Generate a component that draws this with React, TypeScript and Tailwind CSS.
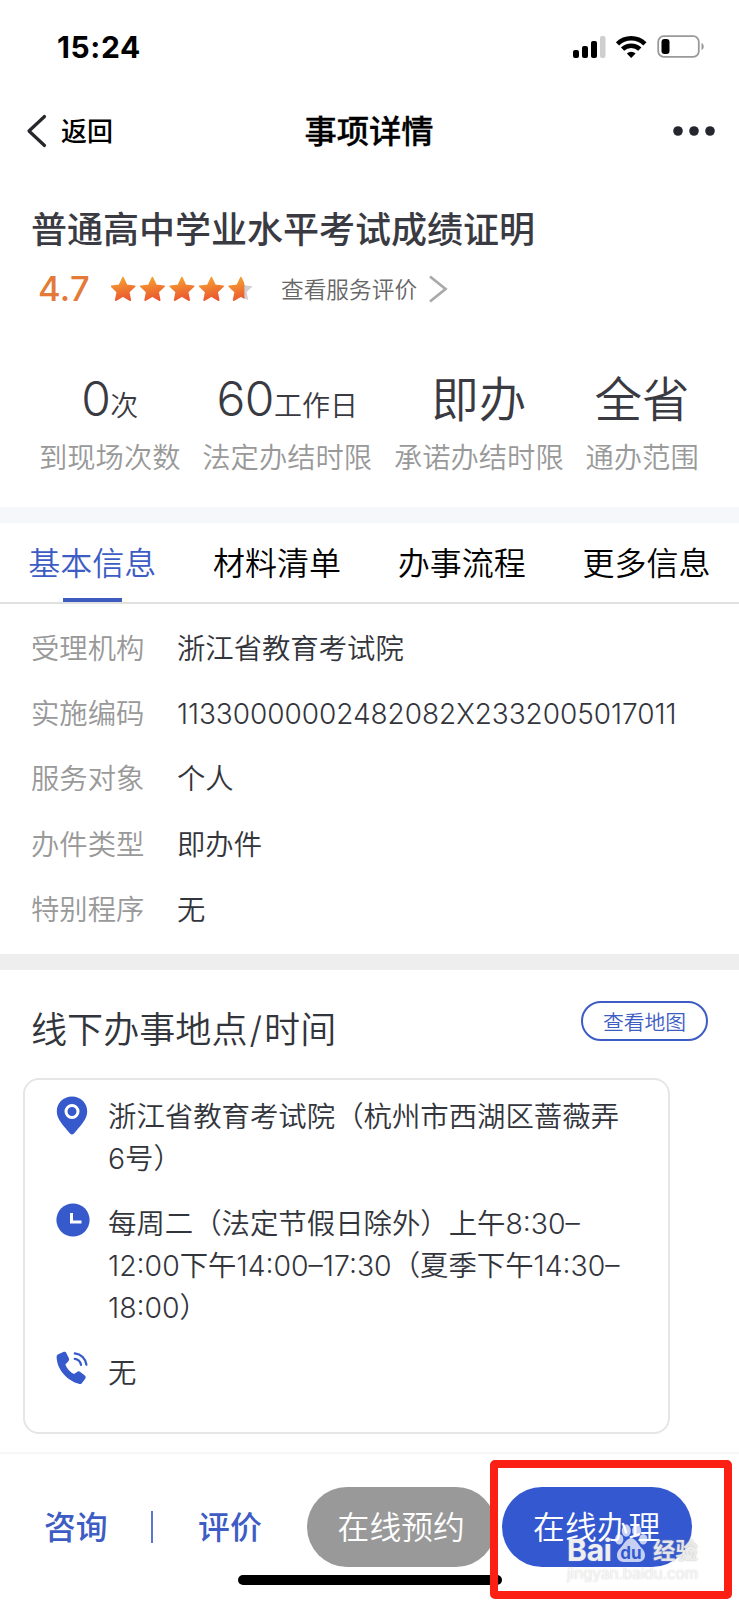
import React from "react";

const stats = [
  { num: "0", unit: "次", label: "到现场次数" },
  { num: "60", unit: "工作日", label: "法定办结时限" },
  { big: "即办", label: "承诺办结时限" },
  { big: "全省", label: "通办范围" },
];

const tabs = ["基本信息", "材料清单", "办事流程", "更多信息"];

const info = [
  ["受理机构", "浙江省教育考试院"],
  ["实施编码", "11330000002482082X2332005017011"],
  ["服务对象", "个人"],
  ["办件类型", "即办件"],
  ["特别程序", "无"],
];

const STAR = "M12 0.6 L15.5 8.2 L23.8 9.2 L17.7 14.9 L19.3 23.2 L12 19.1 L4.7 23.2 L6.3 14.9 L0.2 9.2 L8.5 8.2 Z";

function Stars() {
  return (
    <svg className="ml-[22px] h-[26px] w-[144px]" viewBox="0 0 144 26">
      <defs>
        <linearGradient id="star" x1="0.3" y1="0" x2="0.6" y2="1">
          <stop offset="0" stopColor="#f5a232" />
          <stop offset="1" stopColor="#ea5530" />
        </linearGradient>
        <clipPath id="part">
          <rect x="-1" y="-1" width="16.5" height="27" />
        </clipPath>
      </defs>
      {[0, 29.4, 58.9, 88.4].map((x) => (
        <path key={x} d={STAR} transform={`translate(${x} 1)`} fill="url(#star)" stroke="url(#star)" strokeWidth="1.6" strokeLinejoin="round" />
      ))}
      <g transform="translate(117.9 1)">
        <path d={STAR} fill="#cfcfd4" />
        <path d={STAR} fill="url(#star)" stroke="url(#star)" strokeWidth="1.6" strokeLinejoin="round" clipPath="url(#part)" />
      </g>
    </svg>
  );
}

function StatusBar() {
  return (
    <div className="flex h-[94px] items-center justify-between pr-[34px] pl-[57px]">
      <span className="text-[30px] leading-none font-bold tracking-[0.6px] text-black">15:24</span>
      <svg className="h-[26px] w-[132px]" viewBox="0 0 132 26">
        <rect x="0" y="16" width="6" height="8" rx="2" />
        <rect x="9" y="12" width="6" height="12" rx="2" />
        <rect x="18" y="7" width="6" height="17" rx="2" />
        <rect x="27" y="2" width="5.5" height="22" rx="2" fill="#cfcfcf" />
        <g fill="none" stroke="#000" strokeWidth="4.6">
          <path d="M44.5 9.8 A19.5 19.5 0 0 1 71.9 9.8" />
          <path d="M49.6 15.2 A12.3 12.3 0 0 1 66.8 15.2" />
        </g>
        <path d="M58.2 24 L53.8 19.6 A6.2 6.2 0 0 1 62.6 19.6 Z" />
        <rect x="85.2" y="2.2" width="40.6" height="20.6" rx="5.5" fill="none" stroke="#999" strokeWidth="1.8" />
        <rect x="88.5" y="5" width="8" height="15" rx="3" />
        <path d="M128.5 9 C131.5 10 131.5 15 128.5 16 Z" fill="#999" />
      </svg>
    </div>
  );
}

function PinIcon() {
  return (
    <svg className="-ml-px h-[39px] w-[32px]" viewBox="0 0 32 39">
      <path d="M16 0.5 C7.4 0.5 0.8 7 0.8 15.4 C0.8 23.5 8.4 30.5 14 37.4 Q16 39.4 18 37.4 C23.6 30.5 31.2 23.5 31.2 15.4 C31.2 7 24.6 0.5 16 0.5 Z" fill="#3659cc" />
      <circle cx="16" cy="15.5" r="6" fill="none" stroke="#fff" strokeWidth="3" />
    </svg>
  );
}

function ClockIcon() {
  return (
    <svg className="-ml-px h-[34px] w-[34px]" viewBox="0 0 34 34">
      <circle cx="17" cy="17" r="16.6" fill="#3659cc" />
      <path d="M15.5 10 V19 H25.5" fill="none" stroke="#fff" strokeWidth="3" />
    </svg>
  );
}

function PhoneIcon() {
  return (
    <svg className="-mt-px -ml-px h-[34px] w-[32px]" viewBox="0 0 32 34">
      <path d="M1.8 3.4 L7.8 0.8 Q9.6 0.2 10.3 2 L13 7.6 Q13.4 9.2 12.4 10.2 L9.4 13.4 C10.8 17.5 14.4 21.2 18 23 L21.8 20.6 Q22.9 19.9 24 20.7 L29.1 24.8 Q30.2 26 29.4 27.4 L25.8 32.2 Q24.6 33.6 22.8 32.8 C10.5 29.5 0.8 18 0.6 5.8 Q0.6 4.2 1.8 3.4 Z" fill="#3659cc" />
      <g fill="none" stroke="#3659cc" strokeWidth="2.3" strokeLinecap="round">
        <path d="M18.8 2.4 C25 3 29.6 7.6 30.4 13.6" />
        <path d="M18.8 7.8 C22 8.3 24.4 10.6 25 13.8" />
      </g>
    </svg>
  );
}

function Watermark() {
  return (
    <div className="absolute top-[1520px] left-[567px] w-[136px] text-white/75">
      <div className="flex h-[44px] items-end">
        <span className="w-[46px] text-[30px] leading-[28px] font-bold tracking-[-0.2px] [text-shadow:0_0_1px_#c5c5c5]">Bai</span>
        <svg className="ml-px h-[42px] w-[34px]" viewBox="0 0 36 42">
          <g fill="#fff" fillOpacity="0.72">
            <ellipse cx="5.5" cy="17" rx="4.4" ry="5.5" />
            <ellipse cx="13" cy="8" rx="4.8" ry="6.5" />
            <ellipse cx="24" cy="8" rx="4.8" ry="6.5" />
            <ellipse cx="31" cy="17" rx="4.4" ry="5.5" />
            <path d="M18 16 C23 16 25 22 29 26 C35 31 34 41 26 41 H10 C2 41 1 31 7 26 C11 22 13 16 18 16 Z" />
          </g>
          <text x="18" y="37.5" textAnchor="middle" fontFamily="Inter" fontWeight="700" fontSize="18" fill="#3458d0">du</text>
        </svg>
        <span className="ml-[5px] text-[22.5px] leading-[27px] font-bold whitespace-nowrap [text-shadow:0_0_1.5px_#a5a5a5]">经验</span>
      </div>
      <div className="mt-[1px] text-[15.4px] leading-[18px] text-[#fafafa] [text-shadow:0_0_1.5px_#bbb]">jingyan.baidu.com</div>
    </div>
  );
}

export default function App() {
  return (
    <div className="relative flex h-[1600px] w-[739px] flex-col overflow-hidden bg-white font-['Inter','Noto_Sans_CJK_SC',sans-serif] font-[350] text-[#33353c]">
      <StatusBar />

      <header className="grid h-[74px] grid-cols-3 items-center px-[23px]">
        <div className="flex items-center pl-[3px]">
          <svg className="h-[34px] w-[22px]" viewBox="0 0 22 34">
            <path d="M18.5 2.5 L3 17 L18.5 31.5" fill="none" stroke="#26262b" strokeWidth="3.2" strokeLinecap="round" strokeLinejoin="round" />
          </svg>
          <span className="ml-[13px] pt-[2px] text-[26px] leading-none font-medium text-black">返回</span>
        </div>
        <h1 className="pt-[3px] pr-px text-center text-[32.3px] leading-none font-medium text-black [-webkit-text-stroke:0.3px_#000]">事项详情</h1>
        <svg className="h-[12px] w-[44px] justify-self-end" viewBox="0 0 44 12" fill="#26262e">
          <circle cx="6" cy="6" r="4.8" />
          <circle cx="22" cy="6" r="4.8" />
          <circle cx="38" cy="6" r="4.8" />
        </svg>
      </header>

      <section className="h-[339px]">
        <h2 className="mt-[36px] pl-[31px] text-[36px] leading-[52px] font-medium whitespace-nowrap text-[#3a3a42]">普通高中学业水平考试成绩证明</h2>
        <div className="mt-[13px] flex h-[40px] items-center pl-[38px]">
          <span className="w-[51px] text-[34.5px] leading-none font-medium tracking-[0.3px] text-[#e37a38]">4.7</span>
          <Stars />
          <span className="ml-[26px] pt-[3px] text-[22.7px] leading-none text-[#666]">查看服务评价</span>
          <svg className="ml-[11px] h-[28px] w-[20px]" viewBox="0 0 20 28">
            <path d="M2 1.5 L17.5 14 L2 26.5" fill="none" stroke="#aaa" strokeWidth="2.8" />
          </svg>
        </div>
        <div className="mt-[62px] flex gap-[21.8px] pl-[39px] text-center whitespace-nowrap">
          {stats.map((s) => (
            <div key={s.label} className="flex flex-col items-center">
              <div className="flex h-[56px] items-baseline leading-[56px] text-[#3a3a42]">
                {s.big ? (
                  <span className="pt-px text-[47.5px] leading-[56px]">{s.big}</span>
                ) : (
                  <>
                    <span className="text-[48px] tracking-[-0.5px]">{s.num}</span>
                    <span className="text-[28px]">{s.unit}</span>
                  </>
                )}
              </div>
              <div className="mt-[10px] text-[28.3px] leading-[42px] text-[#999]">{s.label}</div>
            </div>
          ))}
        </div>
      </section>

      <div className="h-[16px] bg-[#f6f7fa]" />

      <nav className="grid h-[81px] grid-cols-4 border-b-2 border-[#e0e0e0]">
        {tabs.map((t, i) => (
          <div key={t} className="flex flex-col items-center justify-between pt-[17px]">
            <span className={i === 0 ? "text-[32px] leading-[48px] text-[#3d5cc4]" : "text-[32px] leading-[48px] text-black"}>{t}</span>
            <span className={i === 0 ? "h-[4px] w-[59px] bg-[#3d5cc0]" : "h-[4px] w-[59px]"} />
          </div>
        ))}
      </nav>

      <dl className="h-[350px] pt-[13px] pl-[31px] text-[28.35px] leading-[65.2px] whitespace-nowrap">
        {info.map(([k, v]) => (
          <div key={k} className="flex h-[65.2px]">
            <dt className="w-[146px] text-[#999]">{k}</dt>
            <dd className={v.length > 20 ? "text-[28px] tracking-[-0.05px]" : ""}>{v}</dd>
          </div>
        ))}
      </dl>

      <div className="h-[16px] bg-[#eee]" />

      <section className="h-[482px]">
        <div className="flex h-[108px] items-start justify-between pt-[31px] pr-[31px] pl-[31px]">
          <h3 className="pt-[2px] text-[36.1px] leading-[54px] whitespace-nowrap">线下办事地点<span className="mx-[2px]">/</span>时间</h3>
          <button className="h-[40px] w-[127px] rounded-full border-2 border-[#3d5cc4] pt-[2px] text-[20.8px] leading-[36px] text-[#3d5cc4]">查看地图</button>
        </div>
        <div className="ml-[23px] h-[356px] w-[647px] rounded-[16px] border-2 border-[#e6e6e6] pt-[16px] pl-[32px] text-[28.4px] leading-[41.7px] whitespace-nowrap">
          <div className="flex items-start gap-[20px]">
            <PinIcon />
            <div>浙江省教育考试院（杭州市西湖区蔷薇弄<br />6号）</div>
          </div>
          <div className="mt-[24px] flex items-start gap-[18px]">
            <ClockIcon />
            <div>每周二（法定节假日除外）上午8:30–<br />12:00下午14:00–17:30（夏季下午14:30–<br />18:00）</div>
          </div>
          <div className="mt-[23px] flex items-start gap-[20px]">
            <PhoneIcon />
            <div>无</div>
          </div>
        </div>
      </section>

      <footer className="flex h-[148px] items-start border-t-2 border-[#f6f6f6] pt-[33px] pl-[44px] text-[31.8px] leading-[82px] whitespace-nowrap">
        <span className="font-medium text-[#3d5cc4]">咨询</span>
        <span className="mt-[24px] ml-[43px] h-[32px] w-[2px] bg-[#5b76cc]" />
        <span className="ml-[45.5px] font-medium text-[#3d5cc4]">评价</span>
        <button className="ml-[45.5px] h-[80px] w-[189px] rounded-full bg-[#999] pr-px text-white">在线预约</button>
        <button className="ml-[6px] h-[80px] w-[190px] rounded-full bg-[#3458d0] pr-px text-white">在线办理</button>
      </footer>

      <div className="absolute top-[1575px] left-[238px] h-[10px] w-[264px] rounded-full bg-black" />
      <div className="absolute top-[1460px] left-[490px] h-[139px] w-[242px] rounded-[5px] border-8 border-[#fc2014]" />
      <Watermark />
    </div>
  );
}
